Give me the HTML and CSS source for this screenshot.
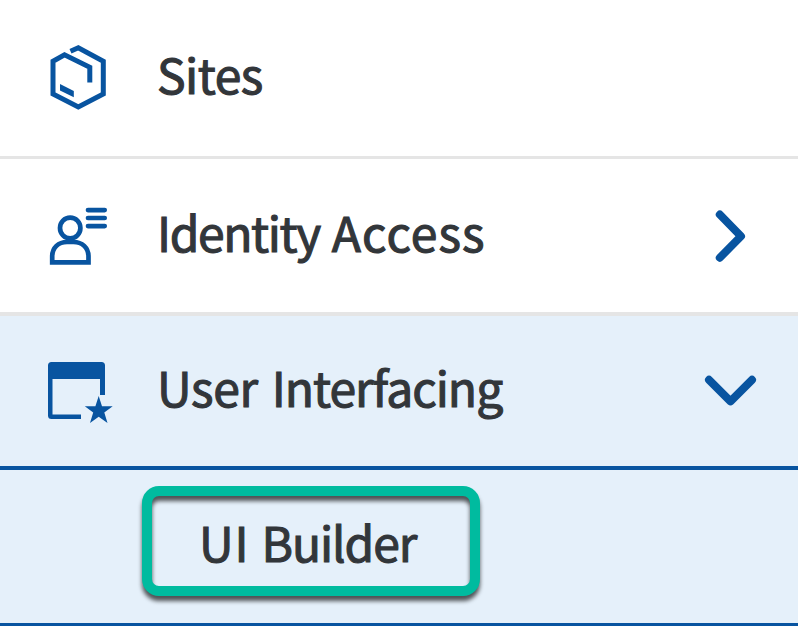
FILE: index.html
```html
<!DOCTYPE html>
<html lang="en">
<head>
<meta charset="utf-8">
<title>Navigation</title>
<link rel="stylesheet" href="styles.css">
</head>
<body>
<nav class="nav">
  <a class="row sites">
    <svg class="icon" viewBox="36 33 90 90"><path class="line hex" d="M70.5 51.2L78.3 47.8L103.3 61.2V94L78.3 107L53 94V61.2L64.5 54.8L89.8 67.2V82.5"/><path class="solid" d="M60 84L73.8 91V97.3L60 90.5Z"/></svg>
    <span class="label"><span class="text w-sites">Sites</span></span>
  </a>
  <a class="row identity">
    <svg class="icon" viewBox="36 190.5 90 90"><ellipse class="line" cx="70.2" cy="227.5" rx="10.2" ry="10.3"/><path class="line" d="M52.2 261.8V256C52.2 247 58.5 241.5 67 241.5H73.5C82 241.5 88.5 247 88.5 256V261.8Z"/><path class="line bars" d="M88 209.6H104.7M88 217.5H104.7M88 225.6H104.7"/></svg>
    <span class="label"><span class="text"><span class="w-identity">Identity</span> <span class="w-access">Access</span></span></span>
    <svg class="chevron" viewBox="690 195.5 80 80"><path d="M719.8 214L741 235.7L719.8 257.2"/></svg>
  </a>
  <a class="row interfacing">
    <svg class="icon" viewBox="36 346 90 90"><path class="solid" d="M51.5 362H101.5Q105 362 105 365.5V395H100V379H52.5V414.5H81V419H51.5Q48 419 48 415.5V365.5Q48 362 51.5 362Z"/><path class="solid" d="M98.7 396L102 406.3H112.7L104.3 412.6L107.5 423L98.7 416.8L90 423L93.2 412.6L84.8 406.3H95.4Z"/></svg>
    <span class="label"><span class="text"><span class="w-user">User</span> <span class="w-interfacing">Interfacing</span></span></span>
    <svg class="chevron" viewBox="690 351 80 80"><path d="M709 379.8L730.5 401.3L752 379.8"/></svg>
  </a>
  <a class="row builder"><span class="highlight"><span class="text"><span class="w-ui">UI</span> <span class="w-builder">Builder</span></span></span></a>
</nav>
</body>
</html>
```
FILE: styles.css
```css
* { box-sizing: border-box; }
body { margin: 0; background: #fff; color: #32363a; font: 48px/70px "Noto Sans CJK JP", sans-serif; overflow: hidden; }
.nav { display: flex; flex-direction: column; width: 798px; }
.row { display: flex; align-items: center; width: 100%; padding-left: 36px; }
.sites { height: 159px; border-bottom: 3px solid #e5e5e5; }
.identity { height: 157px; border-bottom: 4px solid #e5e5e5; }
.interfacing { height: 154px; background: #e5f0fa; border-bottom: 4px solid #0854a0; }
.builder { height: 156px; background: #e5f0fa; border-bottom: 3px solid #0854a0; padding: 16px 0 0 142px; align-items: flex-start; }
.icon { width: 90px; height: 90px; }
.label { margin-left: 31px; flex: 1; padding-bottom: 10px; }
.text { display: inline-block; white-space: nowrap; -webkit-text-stroke: 1.1px #32363a; }
.w-sites { letter-spacing: -.5px; }
.w-identity { letter-spacing: -1.4px; }
.w-access { letter-spacing: 1.1px; margin-left: 1px; }
.w-user { letter-spacing: -.3px; }
.w-interfacing { letter-spacing: -1px; margin-left: 3px; }
.w-ui { letter-spacing: 1px; }
.w-builder { letter-spacing: -1.1px; margin-left: 1px; }
.chevron { width: 80px; height: 80px; margin-right: 28px; }
.chevron path { fill: none; stroke: #0854a0; stroke-width: 8; stroke-linecap: round; stroke-linejoin: round; }
.line { fill: none; stroke: #0854a0; stroke-width: 4.7; }
.hex { stroke-width: 5; }
.bars { stroke-linecap: round; }
.solid { fill: #0854a0; }
.highlight { position: relative; display: flex; align-items: center; width: 338px; height: 110px; padding-left: 57px; }
.highlight::before { content: ""; position: absolute; inset: 0; border: 10px solid #00bb9f; border-radius: 17px; filter: drop-shadow(0 5px 2px rgba(0,0,0,.65)); }
```
